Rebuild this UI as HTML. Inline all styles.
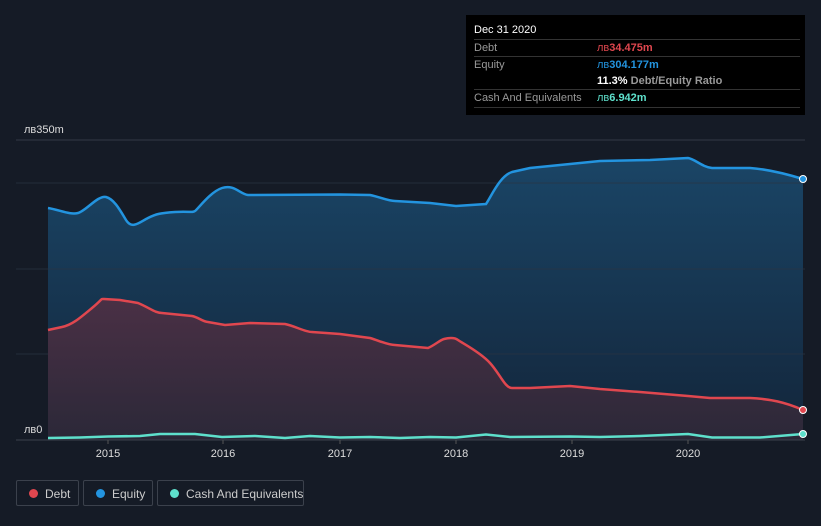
<!DOCTYPE html><html><head><style>
html,body{margin:0;background:#151b26;width:821px;height:526px;overflow:hidden;font-family:"Liberation Sans",sans-serif;position:relative}
.tt{position:absolute;left:466px;top:15px;width:339px;height:100px;background:#000;color:#fff;font-size:11px}
.tt .r{position:absolute;left:8px;right:5px;border-top:1px solid #333;height:17px;line-height:17px;color:#999;white-space:nowrap}
.tt .r b{font-weight:bold}
.leg{position:absolute;top:480px;height:26px;border:1px solid #3b414c;border-radius:2px;color:#ccc;font-size:12px;line-height:26px;box-sizing:border-box;white-space:nowrap}
.leg i{position:absolute;left:12px;top:8px;width:9px;height:9px;border-radius:50%}
.leg span{position:absolute;left:28px}
</style></head><body>
<svg width="821" height="526" style="position:absolute;left:0;top:0">
<defs>
<linearGradient id="ge" x1="0" y1="0" x2="0" y2="1"><stop offset="0" stop-color="#1a4566"/><stop offset="1" stop-color="#13253a"/></linearGradient>
<linearGradient id="gd" x1="0" y1="0" x2="0" y2="1"><stop offset="0" stop-color="#4a3045"/><stop offset="1" stop-color="#2b2838"/></linearGradient>
</defs>
<line x1="16" y1="140" x2="805" y2="140" stroke="#333a45"/>
<path d="M48,208 C60,210 70,215 78,213 S98,195 106,197 S120,210 126,220 S140,222 148,218 S160,213 175,212 S192,213 195,211 S210,192 222,188 S240,194 248,195 L340,194.5 L370,195 C380,197 388,201 395,201 L430,203 L456,206 L486,204 C492,195 500,176 512,172 L530,168 L570,164 L600,161 L650,160 L688,158 C695,159 702,167 712,168 L750,168 C765,169 780,172 803,179 L803,440 L48,440Z" fill="url(#ge)"/>
<line x1="16" y1="183" x2="805" y2="183" stroke="#2b3442" opacity=".7"/>
<line x1="16" y1="269" x2="805" y2="269" stroke="#2b3442" opacity=".7"/>
<line x1="16" y1="354" x2="805" y2="354" stroke="#2b3442" opacity=".7"/>
<path d="M48,330 L62,327 C72,325 80,318 92,308 S100,299 104,299 L120,300 L138,303 C150,308 155,313 162,313 L192,316 C198,317 203,322 208,322 L225,325 L250,323 L285,324 C295,326 305,332 312,332 L340,334 L370,338 C380,341 388,345 395,345 L428,348 C435,345 440,340 444,339 S454,337 458,340 S480,352 490,363 S505,388 512,388 L530,388 L570,386 L600,389 L640,392 L688,396 L710,398 L750,398 C770,399 785,402 803,410 L803,440 L48,440Z" fill="url(#gd)"/>
<path d="M48,208 C60,210 70,215 78,213 S98,195 106,197 S120,210 126,220 S140,222 148,218 S160,213 175,212 S192,213 195,211 S210,192 222,188 S240,194 248,195 L340,194.5 L370,195 C380,197 388,201 395,201 L430,203 L456,206 L486,204 C492,195 500,176 512,172 L530,168 L570,164 L600,161 L650,160 L688,158 C695,159 702,167 712,168 L750,168 C765,169 780,172 803,179" fill="none" stroke="#2394df" stroke-width="2.5"/>
<path d="M48,330 L62,327 C72,325 80,318 92,308 S100,299 104,299 L120,300 L138,303 C150,308 155,313 162,313 L192,316 C198,317 203,322 208,322 L225,325 L250,323 L285,324 C295,326 305,332 312,332 L340,334 L370,338 C380,341 388,345 395,345 L428,348 C435,345 440,340 444,339 S454,337 458,340 S480,352 490,363 S505,388 512,388 L530,388 L570,386 L600,389 L640,392 L688,396 L710,398 L750,398 C770,399 785,402 803,410" fill="none" stroke="#e0474f" stroke-width="2.5"/>
<path d="M48,438 L80,437.5 L108,436.5 L140,436 L160,434 L195,434 L222,437 L255,436 L285,438 L310,436 L340,437.5 L370,437 L400,438 L430,437 L456,437.5 L486,434.5 L510,437 L570,436.5 L600,437 L640,436 L688,434 L712,437.5 L760,437.5 L803,434" fill="none" stroke="#5ee0cc" stroke-width="2.5"/>
<line x1="16" y1="440" x2="805" y2="440" stroke="#3a414c"/>
<g stroke="#555" ><line x1="108" y1="440" x2="108" y2="444"/><line x1="223" y1="440" x2="223" y2="444"/><line x1="340" y1="440" x2="340" y2="444"/><line x1="456" y1="440" x2="456" y2="444"/><line x1="572" y1="440" x2="572" y2="444"/><line x1="688" y1="440" x2="688" y2="444"/></g>
<circle cx="803" cy="179" r="3.5" fill="#2394df" stroke="#fff" stroke-width="1"/>
<circle cx="803" cy="410" r="3.5" fill="#e0474f" stroke="#fff" stroke-width="1"/>
<circle cx="803" cy="434" r="3.5" fill="#5ee0cc" stroke="#fff" stroke-width="1"/>
<rect x="16" y="421" width="32" height="16" fill="#151b26"/>
<g fill="#ddd" font-size="11" font-family="Liberation Sans">
<text x="24" y="133">лв350m</text><text x="24" y="433">лв0</text>
<g text-anchor="middle"><text x="108" y="457">2015</text><text x="223" y="457">2016</text><text x="340" y="457">2017</text><text x="456" y="457">2018</text><text x="572" y="457">2019</text><text x="688" y="457">2020</text></g>
</g>
</svg>
<div class="tt">
<div style="position:absolute;left:8px;top:9px">Dec 31 2020</div>
<div class="r" style="top:24px">Debt<span style="position:absolute;left:123px;color:#e0474f">лв<b>34.475m</b></span></div>
<div class="r" style="top:41px">Equity<span style="position:absolute;left:123px;color:#2394df">лв<b>304.177m</b></span></div>
<div class="r" style="top:58px;border-top:none"><span style="position:absolute;left:123px;color:#fff"><b>11.3%</b> <span style="color:#999;font-weight:bold">Debt/Equity Ratio</span></span></div>
<div class="r" style="top:74px;border-bottom:1px solid #333">Cash And Equivalents<span style="position:absolute;left:123px;color:#5ee0cc">лв<b>6.942m</b></span></div>
</div>
<div class="leg" style="left:16px;width:63px"><i style="background:#e0474f"></i><span>Debt</span></div>
<div class="leg" style="left:83px;width:70px"><i style="background:#2394df"></i><span>Equity</span></div>
<div class="leg" style="left:157px;width:147px"><i style="background:#5ee0cc"></i><span>Cash And Equivalents</span></div>
</body></html>
